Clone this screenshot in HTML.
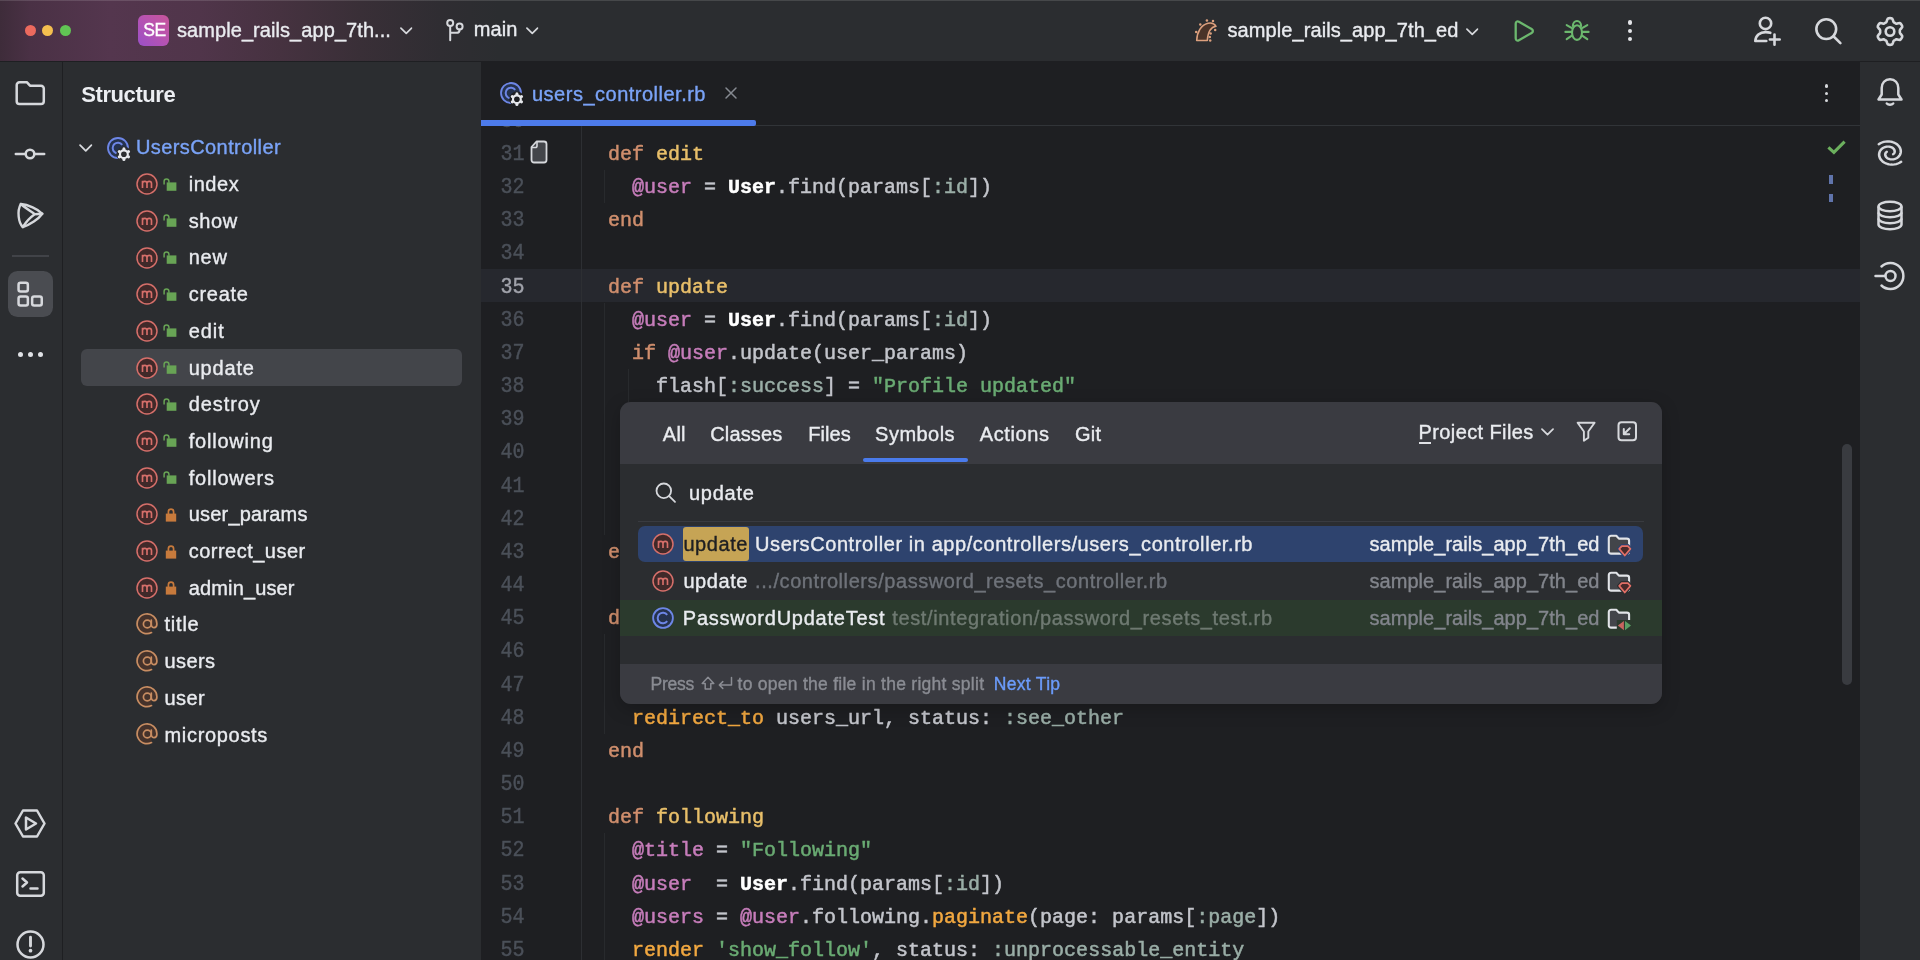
<!DOCTYPE html>
<html>
<head>
<meta charset="utf-8">
<title>RubyMine</title>
<style>
*{box-sizing:border-box;margin:0;padding:0}
html,body{width:1920px;height:960px;overflow:hidden;background:#1e1f22}
body{font-family:"Liberation Sans",sans-serif;color:#dfe1e5;position:relative;font-size:20px}
.abs{position:absolute}
svg{display:block;overflow:visible}
.t{position:absolute;white-space:pre;-webkit-text-stroke:.38px currentColor}
#titlebar{left:0;top:0;width:1920px;height:62px;background:linear-gradient(90deg,#3e2c3a 0px,#4a3145 30px,#54364e 110px,#50354a 200px,#463240 280px,#392f37 360px,#2f2d32 440px,#2b2d30 500px,#2b2d30 100%);border-bottom:1px solid #1e1f22;box-shadow:inset 0 1px 0 rgba(255,255,255,.13)}
.tl{width:11px;height:11px;border-radius:50%;top:25px}
#lstrip{left:0;top:62px;width:62.5px;height:898px;background:#2b2d30;border-right:1px solid #1e1f22}
#rstrip{left:1859px;top:62px;width:61px;height:898px;background:#2b2d30;border-left:1px solid #1e1f22}
#struct{left:62.5px;top:62px;width:419px;height:898px;background:#2b2d30;border-right:1px solid #1e1f22}
#editor{left:481px;top:62px;width:1378px;height:898px;background:#1e1f22}
.ln{transform:scaleY(1.1);transform-origin:50% 66%;-webkit-text-stroke:.4px currentColor;position:absolute;left:0;width:43.5px;text-align:right;font-family:"Liberation Mono",monospace;font-size:20px;color:#4b5059;height:33px;line-height:33px}
.cl{-webkit-text-stroke:.5px currentColor;position:absolute;left:103px;font-family:"Liberation Mono",monospace;font-size:20px;color:#c3c5cb;height:33px;line-height:33px;white-space:pre}
.k{color:#cf8e6d}.f{color:#e8bf6a}.iv{color:#c77dbb}.c{color:#fff;font-weight:bold}.sy{color:#9aaea7}.s{color:#6aab73}.o{color:#f2a840}
#popup{left:620px;top:402px;width:1041.8px;height:301.7px;background:#2b2d30;border-radius:11px;overflow:hidden;box-shadow:0 5px 18px rgba(0,0,0,.22)}
#layer,#titlebar,#popup{will-change:transform}
</style>
</head>

<body>

<svg width="0" height="0" style="position:absolute">
<defs>
<symbol id="i-m" viewBox="0 0 22 22"><circle cx="11" cy="11" r="10" fill="#402929" stroke="#d66f6a" stroke-width="1.5"/><path d="M6.5 15V7.8M6.5 10.5c.1-2.8 4.4-3 4.5 0V15M11 10.5c.1-2.8 4.4-3 4.5 0V15" stroke="#d66f6a" stroke-width="1.65" fill="none"/></symbol>
<symbol id="i-c" viewBox="0 0 22 22"><circle cx="11" cy="11" r="9.9" fill="#25324d" stroke="#6d86e6" stroke-width="1.8"/><path d="M15.2 7.8a5.3 5.3 0 1 0 0 6.4" stroke="#6d86e6" stroke-width="2" fill="none"/></symbol>
<symbol id="i-at" viewBox="0 0 22 22"><path d="M15.5 19.6A9.9 9.9 0 1 1 20.9 11c0 5-5.6 4.4-5.6 .8V7" fill="#45322b" stroke="#c88d62" stroke-width="1.7" stroke-linecap="round"/><circle cx="11.3" cy="11" r="3.9" fill="none" stroke="#c88d62" stroke-width="1.7"/></symbol>
<symbol id="i-lo" viewBox="0 0 14 14"><rect x="3.7" y="4.4" width="9.7" height="8.4" fill="#68a455"/><path d="M1.1 6.4V3.3a2.4 2.4 0 0 1 4.8 0V4.8" stroke="#68a455" stroke-width="1.5" fill="none"/></symbol>
<symbol id="i-lc" viewBox="0 0 14 14"><rect x="1.8" y="5.6" width="10.4" height="8" fill="#c77a3c"/><path d="M4.4 6V3.7a2.6 2.6 0 0 1 5.2 0V6" stroke="#c77a3c" stroke-width="1.7" fill="none"/></symbol>
<symbol id="i-cls" viewBox="0 0 26 26"><circle cx="11" cy="11" r="10" fill="#25324d" stroke="#6d86e6" stroke-width="1.8"/><path d="M15.2 7.8a5.3 5.3 0 1 0 0 6.4" stroke="#6d86e6" stroke-width="2" fill="none"/><g transform="translate(16.9 17.2)"><circle r="7.6" fill="#2b2d30"/><g fill="#e6e8ec"><circle cx="0" cy="-5.3" r="1.55"/><circle cx="4.59" cy="-2.65" r="1.55"/><circle cx="4.59" cy="2.65" r="1.55"/><circle cx="0" cy="5.3" r="1.55"/><circle cx="-4.59" cy="2.65" r="1.55"/><circle cx="-4.59" cy="-2.65" r="1.55"/></g><circle r="3.9" fill="none" stroke="#e6e8ec" stroke-width="2.2"/><circle r="2.2" fill="#2b2d30"/></g></symbol>
<symbol id="i-cls2" viewBox="0 0 26 26"><circle cx="11" cy="11" r="10" fill="#25324d" stroke="#6d86e6" stroke-width="1.8"/><path d="M15.2 7.8a5.3 5.3 0 1 0 0 6.4" stroke="#6d86e6" stroke-width="2" fill="none"/><g transform="translate(16.9 17.2)"><circle r="7.6" fill="#1e1f22"/><g fill="#e6e8ec"><circle cx="0" cy="-5.3" r="1.55"/><circle cx="4.59" cy="-2.65" r="1.55"/><circle cx="4.59" cy="2.65" r="1.55"/><circle cx="0" cy="5.3" r="1.55"/><circle cx="-4.59" cy="2.65" r="1.55"/><circle cx="-4.59" cy="-2.65" r="1.55"/></g><circle r="3.9" fill="none" stroke="#e6e8ec" stroke-width="2.2"/><circle r="2.2" fill="#1e1f22"/></g></symbol>
<symbol id="i-chev" viewBox="0 0 14 9"><path d="M1 1.2l6 6 6-6" fill="none" stroke="#d6d8dc" stroke-width="1.9" stroke-linecap="round" stroke-linejoin="round"/></symbol>
</defs>
</svg>

<div id="titlebar" class="abs">
<div class="abs tl" style="left:25px;background:#ec6a5e"></div>
<div class="abs tl" style="left:42.3px;background:#f4bf4f"></div>
<div class="abs tl" style="left:60px;background:#61c454"></div>
<div class="abs" style="left:138px;top:15px;width:31px;height:31px;border-radius:6px;background:linear-gradient(45deg,#9a50c8 0%,#b853b0 55%,#c8559a 100%)"></div>
<div class="t" style="left:143.2px;top:19.33px;font-size:17.5px;line-height:23px;color:#fff;letter-spacing:-0.38px;">SE</div>
<div class="t" style="left:177px;top:16.77px;font-size:20px;line-height:26px;color:#e9ebef;letter-spacing:0.071px;">sample_rails_app_7th...</div>
<div class="t" style="left:473.7px;top:16.47px;font-size:20px;line-height:26px;color:#e9ebef;letter-spacing:0.11px;">main</div>
<div class="t" style="left:1227.5px;top:17.07px;font-size:20px;line-height:26px;color:#e9ebef;letter-spacing:0.084px;">sample_rails_app_7th_ed</div>
<svg class="abs" style="left:400px;top:26.5px" width="12.5" height="8"><use href="#i-chev"/></svg>
<svg class="abs" style="left:525.5px;top:26.5px" width="12.5" height="8"><use href="#i-chev"/></svg>
<svg class="abs" style="left:1466px;top:27.5px" width="12.5" height="8"><use href="#i-chev"/></svg>
<svg class="abs" style="left:445px;top:19px" width="20" height="22" viewBox="0 0 20 22" ><g fill="none" stroke="#d6d8dc" stroke-width="2" stroke-linecap="round"><circle cx="5.2" cy="4.1" r="3"/><circle cx="14.6" cy="7.4" r="3"/><path d="M5.2 7.2V21.3M14.6 10.5v.4c0 2-1.4 2.9-3.4 2.9H5.3"/></g></svg>
<svg class="abs" style="left:1195px;top:19px" width="23" height="23" viewBox="0 0 23 23" ><path d="M1.7 21.5C2 13 6 6 13 4.3c3.5-.800 6.5.500 8 3-5 .700-8 4.7-8.7 14.2z" fill="#4a3328" stroke="#dca07e" stroke-width="1.6" stroke-linejoin="round"/><g fill="#dca07e"><circle cx="1.2" cy="12.9" r="1.25"/><circle cx="5.3" cy="5.4" r="1.25"/><circle cx="11.9" cy="1.5" r="1.25"/><circle cx="18" cy="1.9" r="1.25"/><circle cx="20.2" cy="11.1" r="1.25"/><circle cx="15.6" cy="14.4" r="1.25"/><circle cx="14.8" cy="18" r="1.25"/><circle cx="15.2" cy="21.5" r="1.25"/></g></svg>
<svg class="abs" style="left:1513px;top:18.7px" width="24" height="24" viewBox="0 0 24 24" ><path d="M2.7 4.7c0-2 1.5-2.9 3.2-1.9l12.7 7.3c1.7 1 1.7 2.8 0 3.8l-12.7 7.3c-1.7 1-3.2.1-3.2-1.9z" fill="none" stroke="#6cb86e" stroke-width="2.3" stroke-linejoin="round"/></svg>
<svg class="abs" style="left:1564px;top:18px" width="26" height="24" viewBox="0 0 26 24" ><g fill="none" stroke="#6cb86e" stroke-width="2.1" stroke-linecap="round"><ellipse cx="13" cy="14.6" rx="5" ry="7.3"/><path d="M8.9 8a4.1 5 0 0 1 8.2 0"/><path d="M2.7 7.1l4.8 2.7M1.4 13.9h5.8M2.7 21.2l4.8-3.3M23.3 7.1l-4.8 2.7M24.6 13.9h-5.8M23.3 21.2l-4.8-3.3"/></g></svg>
<div class="abs" style="left:1627.9px;top:20.2px;width:4.4px;height:4.4px;border-radius:50%;background:#e4e5e9"></div>
<div class="abs" style="left:1627.9px;top:28.5px;width:4.4px;height:4.4px;border-radius:50%;background:#e4e5e9"></div>
<div class="abs" style="left:1627.9px;top:36.699999999999996px;width:4.4px;height:4.4px;border-radius:50%;background:#e4e5e9"></div>
<svg class="abs" style="left:1753px;top:16px" width="30" height="31" viewBox="0 0 30 31" ><g fill="none" stroke="#d6d8dc" stroke-width="2.6" stroke-linecap="round" stroke-linejoin="round"><circle cx="12.5" cy="7.4" r="5.7"/><path d="M17.3 16.8c-1.5-.5-3-.7-4.6-.7-6 0-10.1 3.6-10.4 8.9h11"/><path d="M21.5 18.6v10.2M16.9 23.5h9.8"/></g></svg>
<svg class="abs" style="left:1814px;top:17px" width="29" height="29" viewBox="0 0 29 29" ><g fill="none" stroke="#d6d8dc" stroke-width="2.6" stroke-linecap="round"><circle cx="12.25" cy="12.1" r="9.9"/><path d="M19.4 19.3l7 6.8"/></g></svg>
<svg class="abs" style="left:1875px;top:15.5px" width="30" height="31" viewBox="0 0 30 31" ><g fill="none" stroke="#d6d8dc" stroke-width="2.6" stroke-linejoin="round"><path d="M24.85 15.5 L24.81 16.36 L25.05 17.27 L26.2 18.5 L27.22 19.95 L27.1 21.14 L26.56 22.17 L25.94 23.16 L24.96 23.86 L23.2 23.7 L21.56 23.31 L20.65 23.57 L19.93 24.03 L19.16 24.43 L18.49 25.08 L18 26.7 L17.26 28.3 L16.16 28.8 L15 28.85 L13.84 28.8 L12.74 28.3 L12 26.7 L11.51 25.08 L10.84 24.43 L10.08 24.03 L9.35 23.57 L8.44 23.31 L6.8 23.7 L5.04 23.86 L4.06 23.16 L3.44 22.18 L2.9 21.14 L2.78 19.95 L3.8 18.5 L4.95 17.27 L5.19 16.36 L5.15 15.5 L5.19 14.64 L4.95 13.73 L3.8 12.5 L2.78 11.05 L2.9 9.86 L3.44 8.82 L4.06 7.84 L5.04 7.14 L6.8 7.3 L8.44 7.69 L9.35 7.43 L10.07 6.97 L10.84 6.57 L11.51 5.92 L12 4.3 L12.74 2.7 L13.84 2.2 L15 2.15 L16.16 2.2 L17.26 2.7 L18 4.3 L18.49 5.92 L19.16 6.57 L19.92 6.97 L20.65 7.43 L21.56 7.69 L23.2 7.3 L24.96 7.14 L25.94 7.84 L26.56 8.83 L27.1 9.86 L27.22 11.05 L26.2 12.5 L25.05 13.73 L24.81 14.64Z"/><circle cx="15" cy="15.5" r="4.3"/></g></svg>
</div>
<div id="lstrip" class="abs"></div>
<div id="struct" class="abs"></div>
<div id="editor" class="abs"></div>
<div id="rstrip" class="abs"></div>
<div id="layer" class="abs" style="left:0;top:0;width:1920px;height:960px">
<svg class="abs" style="left:15px;top:80px" width="31" height="26" viewBox="0 0 31 26" ><path d="M4 2.2h7.3l3.2 3.5h11a2.8 2.8 0 0 1 2.8 2.8V21.2a2.8 2.8 0 0 1-2.8 2.8H4a2.8 2.8 0 0 1-2.8-2.8V5a2.8 2.8 0 0 1 2.8-2.8z" fill="none" stroke="#d6d8dc" stroke-width="2.5" stroke-linejoin="round" transform="translate(.5 0)"/></svg>
<svg class="abs" style="left:14px;top:147px" width="32" height="14" viewBox="0 0 32 14" ><g fill="none" stroke="#d6d8dc" stroke-width="2.5" stroke-linecap="round"><circle cx="16" cy="7" r="4.3"/><path d="M1.8 7h9.5M20.7 7h9.5"/></g></svg>
<svg class="abs" style="left:16px;top:201px" width="28" height="28" viewBox="0 0 28 28" ><g fill="none" stroke="#d6d8dc" stroke-width="2.4" stroke-linejoin="round" stroke-linecap="round"><path d="M4.8 3C12 3.6 22 8 26.3 12.7 22.5 18 14 24 6.8 26 2.5 22 .800 10 4.8 3z"/><path d="M4.8 3C9 6.5 15 10.5 18.7 13.2 14 16.5 10 21 6.8 26M18.7 13.2l7.6-.5"/></g></svg>
<div class="abs" style="left:12px;top:255px;width:37px;height:1.5px;background:#414348"></div>
<div class="abs" style="left:7.8px;top:271.2px;width:45.7px;height:46.2px;border-radius:9.5px;background:#4a4c51"></div>
<svg class="abs" style="left:17px;top:280.5px" width="27" height="27" viewBox="0 0 27 27" ><g fill="none" stroke="#d6d8dc" stroke-width="2.5" stroke-linejoin="round"><rect x="1.55" y="1.65" width="9.3" height="8.9" rx="2"/><rect x="1.55" y="15.4" width="9.3" height="9.1" rx="2"/><rect x="15.15" y="15.4" width="9.6" height="9.1" rx="2"/></g></svg>
<div class="abs" style="left:17.5px;top:352.4px;width:5px;height:5px;border-radius:50%;background:#e0e2e6"></div>
<div class="abs" style="left:27.5px;top:352.4px;width:5px;height:5px;border-radius:50%;background:#e0e2e6"></div>
<div class="abs" style="left:37.5px;top:352.4px;width:5px;height:5px;border-radius:50%;background:#e0e2e6"></div>
<svg class="abs" style="left:14px;top:809px" width="32" height="29" viewBox="0 0 32 29" ><g fill="none" stroke="#d6d8dc" stroke-width="2.5" stroke-linejoin="round"><path d="M9 1.5h14l7.5 13-7.5 13H9l-7.5-13z"/><path d="M12 8.5v12l10-6z"/></g></svg>
<svg class="abs" style="left:15.5px;top:871px" width="29" height="26" viewBox="0 0 29 26" ><g fill="none" stroke="#d6d8dc" stroke-width="2.5" stroke-linejoin="round" stroke-linecap="round"><rect x="1.2" y="1.2" width="26.6" height="23.6" rx="3"/><path d="M6.5 7.5l4.5 4-4.5 4M14.5 17.5h7"/></g></svg>
<svg class="abs" style="left:15.5px;top:930px" width="29" height="29" viewBox="0 0 29 29" ><g fill="none" stroke="#d6d8dc" stroke-width="2.5" stroke-linecap="round"><circle cx="14.5" cy="14.5" r="13"/><path d="M14.5 7.3v8.7" stroke-width="2.9"/></g><circle cx="14.5" cy="20.7" r="1.85" fill="#d6d8dc"/></svg>
<div class="t" style="left:81.3px;top:79.57px;font-size:22px;line-height:29px;color:#eceef2;letter-spacing:-0.422px;font-weight:bold;-webkit-text-stroke:0;">Structure</div>
<div class="abs" style="left:81px;top:349px;width:381px;height:37px;border-radius:6px;background:#43454a"></div>
<svg class="abs" style="left:79px;top:144px" width="13.5" height="8.5"><use href="#i-chev"/></svg>
<svg class="abs" style="left:107px;top:136.5px" width="26" height="26"><use href="#i-cls"/></svg>
<div class="t" style="left:136px;top:134.37px;font-size:20px;line-height:26px;color:#7aa3f7;letter-spacing:0.404px;">UsersController</div>
<svg class="abs" style="left:135.7px;top:173.10000000000002px" width="22" height="22"><use href="#i-m"/></svg>
<svg class="abs" style="left:162.6px;top:177.50000000000003px" width="14" height="14"><use href="#i-lo"/></svg>
<div class="t" style="left:188.7px;top:171.07px;font-size:20px;line-height:26px;color:#e9ebef;letter-spacing:0.537px;">index</div>
<svg class="abs" style="left:135.7px;top:209.8px" width="22" height="22"><use href="#i-m"/></svg>
<svg class="abs" style="left:162.6px;top:214.20000000000002px" width="14" height="14"><use href="#i-lo"/></svg>
<div class="t" style="left:188.7px;top:207.77px;font-size:20px;line-height:26px;color:#e9ebef;letter-spacing:0.574px;">show</div>
<svg class="abs" style="left:135.7px;top:246.5px" width="22" height="22"><use href="#i-m"/></svg>
<svg class="abs" style="left:162.6px;top:250.9px" width="14" height="14"><use href="#i-lo"/></svg>
<div class="t" style="left:188.7px;top:244.47px;font-size:20px;line-height:26px;color:#e9ebef;letter-spacing:0.766px;">new</div>
<svg class="abs" style="left:135.7px;top:283.20000000000005px" width="22" height="22"><use href="#i-m"/></svg>
<svg class="abs" style="left:162.6px;top:287.6px" width="14" height="14"><use href="#i-lo"/></svg>
<div class="t" style="left:188.7px;top:281.17px;font-size:20px;line-height:26px;color:#e9ebef;letter-spacing:0.734px;">create</div>
<svg class="abs" style="left:135.7px;top:319.9px" width="22" height="22"><use href="#i-m"/></svg>
<svg class="abs" style="left:162.6px;top:324.29999999999995px" width="14" height="14"><use href="#i-lo"/></svg>
<div class="t" style="left:188.7px;top:317.87px;font-size:20px;line-height:26px;color:#e9ebef;letter-spacing:0.938px;">edit</div>
<svg class="abs" style="left:135.7px;top:356.6px" width="22" height="22"><use href="#i-m"/></svg>
<svg class="abs" style="left:162.6px;top:361px" width="14" height="14"><use href="#i-lo"/></svg>
<div class="t" style="left:188.7px;top:354.57px;font-size:20px;line-height:26px;color:#e9ebef;letter-spacing:0.805px;">update</div>
<svg class="abs" style="left:135.7px;top:393.30000000000007px" width="22" height="22"><use href="#i-m"/></svg>
<svg class="abs" style="left:162.6px;top:397.70000000000005px" width="14" height="14"><use href="#i-lo"/></svg>
<div class="t" style="left:188.7px;top:391.27px;font-size:20px;line-height:26px;color:#e9ebef;letter-spacing:0.915px;">destroy</div>
<svg class="abs" style="left:135.7px;top:430px" width="22" height="22"><use href="#i-m"/></svg>
<svg class="abs" style="left:162.6px;top:434.4px" width="14" height="14"><use href="#i-lo"/></svg>
<div class="t" style="left:188.7px;top:427.97px;font-size:20px;line-height:26px;color:#e9ebef;letter-spacing:0.797px;">following</div>
<svg class="abs" style="left:135.7px;top:466.70000000000005px" width="22" height="22"><use href="#i-m"/></svg>
<svg class="abs" style="left:162.6px;top:471.1px" width="14" height="14"><use href="#i-lo"/></svg>
<div class="t" style="left:188.7px;top:464.67px;font-size:20px;line-height:26px;color:#e9ebef;letter-spacing:0.786px;">followers</div>
<svg class="abs" style="left:135.7px;top:503.4px" width="22" height="22"><use href="#i-m"/></svg>
<svg class="abs" style="left:164.2px;top:507.79999999999995px" width="14" height="14"><use href="#i-lc"/></svg>
<div class="t" style="left:188.7px;top:501.37px;font-size:20px;line-height:26px;color:#e9ebef;letter-spacing:0.207px;">user_params</div>
<svg class="abs" style="left:135.7px;top:540.1px" width="22" height="22"><use href="#i-m"/></svg>
<svg class="abs" style="left:164.2px;top:544.5px" width="14" height="14"><use href="#i-lc"/></svg>
<div class="t" style="left:188.7px;top:538.07px;font-size:20px;line-height:26px;color:#e9ebef;letter-spacing:0.487px;">correct_user</div>
<svg class="abs" style="left:135.7px;top:576.8000000000001px" width="22" height="22"><use href="#i-m"/></svg>
<svg class="abs" style="left:164.2px;top:581.2px" width="14" height="14"><use href="#i-lc"/></svg>
<div class="t" style="left:188.7px;top:574.77px;font-size:20px;line-height:26px;color:#e9ebef;letter-spacing:0.148px;">admin_user</div>
<svg class="abs" style="left:135.7px;top:612.9px" width="22" height="22"><use href="#i-at"/></svg>
<div class="t" style="left:164.5px;top:611.47px;font-size:20px;line-height:26px;color:#e9ebef;letter-spacing:0.775px;">title</div>
<svg class="abs" style="left:135.7px;top:649.6px" width="22" height="22"><use href="#i-at"/></svg>
<div class="t" style="left:164.5px;top:648.17px;font-size:20px;line-height:26px;color:#e9ebef;letter-spacing:0.379px;">users</div>
<svg class="abs" style="left:135.7px;top:686.3px" width="22" height="22"><use href="#i-at"/></svg>
<div class="t" style="left:164.5px;top:684.87px;font-size:20px;line-height:26px;color:#e9ebef;letter-spacing:0.398px;">user</div>
<svg class="abs" style="left:135.7px;top:723px" width="22" height="22"><use href="#i-at"/></svg>
<div class="t" style="left:164.5px;top:721.57px;font-size:20px;line-height:26px;color:#e9ebef;letter-spacing:0.68px;">microposts</div>
<svg class="abs" style="left:500px;top:82px" width="26" height="26"><use href="#i-cls2"/></svg>
<div class="t" style="left:532px;top:80.57px;font-size:20px;line-height:26px;color:#7aa3f7;letter-spacing:0.498px;">users_controller.rb</div>
<svg class="abs" style="left:725px;top:87px" width="12" height="12" viewBox="0 0 12 12" ><path d="M1 1l10 10M11 1L1 11" stroke="#868a91" stroke-width="1.5" stroke-linecap="round"/></svg>
<div class="abs" style="left:481px;top:125px;width:1379px;height:1px;background:#313438"></div>
<div class="abs" style="left:481px;top:119.5px;width:275px;height:6.3px;border-radius:0 2px 2px 0;background:#4d7beb"></div>
<div class="abs" style="left:1825px;top:84.3px;width:3.4px;height:3.4px;border-radius:50%;background:#d6d8dc"></div>
<div class="abs" style="left:1825px;top:91.7px;width:3.4px;height:3.4px;border-radius:50%;background:#d6d8dc"></div>
<div class="abs" style="left:1825px;top:99.1px;width:3.4px;height:3.4px;border-radius:50%;background:#d6d8dc"></div>
<div class="abs" id="code" style="left:481px;top:126px;width:1379px;height:834px;overflow:hidden"><div class="abs" style="left:0;top:143px;width:1379px;height:33px;background:#26282e"></div>
<div class="abs" style="left:100px;top:0;width:1px;height:840px;background:#2d2f33"></div>
<div class="abs" style="left:123px;top:43.9px;width:1px;height:33px;background:#282a2d"></div>
<div class="abs" style="left:123px;top:176.6px;width:1px;height:232px;background:#282a2d"></div>
<div class="abs" style="left:147px;top:242.9px;width:1px;height:66.2px;background:#282a2d"></div>
<div class="abs" style="left:147px;top:342.5px;width:1px;height:33px;background:#282a2d"></div>
<div class="abs" style="left:123px;top:508.3px;width:1px;height:99.3px;background:#282a2d"></div>
<div class="abs" style="left:123px;top:707.3px;width:1px;height:132.5px;background:#282a2d"></div>
<div class="ln" style="top:-21.25px;color:#4b5059">30</div>
<div class="ln" style="top:11.92px;color:#4b5059">31</div>
<div class="cl" style="top:11.92px">  <span class="k">def</span> <span class="f">edit</span></div>
<div class="ln" style="top:45.09px;color:#4b5059">32</div>
<div class="cl" style="top:45.09px">    <span class="iv">@user</span> = <span class="c">User</span>.find(params[<span class="sy">:id</span>])</div>
<div class="ln" style="top:78.26px;color:#4b5059">33</div>
<div class="cl" style="top:78.26px">  <span class="k">end</span></div>
<div class="ln" style="top:111.43px;color:#4b5059">34</div>
<div class="ln" style="top:144.6px;color:#a1a3ab">35</div>
<div class="cl" style="top:144.6px">  <span class="k">def</span> <span class="f">update</span></div>
<div class="ln" style="top:177.77px;color:#4b5059">36</div>
<div class="cl" style="top:177.77px">    <span class="iv">@user</span> = <span class="c">User</span>.find(params[<span class="sy">:id</span>])</div>
<div class="ln" style="top:210.94px;color:#4b5059">37</div>
<div class="cl" style="top:210.94px">    <span class="k">if</span> <span class="iv">@user</span>.update(user_params)</div>
<div class="ln" style="top:244.11px;color:#4b5059">38</div>
<div class="cl" style="top:244.11px">      flash[<span class="sy">:success</span>] = <span class="s">&quot;Profile updated&quot;</span></div>
<div class="ln" style="top:277.28px;color:#4b5059">39</div>
<div class="cl" style="top:277.28px">      <span class="o">redirect_to</span> <span class="iv">@user</span></div>
<div class="ln" style="top:310.45px;color:#4b5059">40</div>
<div class="cl" style="top:310.45px">    <span class="k">else</span></div>
<div class="ln" style="top:343.62px;color:#4b5059">41</div>
<div class="cl" style="top:343.62px">      <span class="o">render</span> <span class="s">&#x27;edit&#x27;</span>, status: <span class="sy">:unprocessable_entity</span></div>
<div class="ln" style="top:376.79px;color:#4b5059">42</div>
<div class="cl" style="top:376.79px">    <span class="k">end</span></div>
<div class="ln" style="top:409.96px;color:#4b5059">43</div>
<div class="cl" style="top:409.96px">  <span class="k">end</span></div>
<div class="ln" style="top:443.13px;color:#4b5059">44</div>
<div class="ln" style="top:476.3px;color:#4b5059">45</div>
<div class="cl" style="top:476.3px">  <span class="k">def</span> <span class="f">destroy</span></div>
<div class="ln" style="top:509.47px;color:#4b5059">46</div>
<div class="cl" style="top:509.47px">    <span class="c">User</span>.find(params[<span class="sy">:id</span>]).destroy</div>
<div class="ln" style="top:542.64px;color:#4b5059">47</div>
<div class="cl" style="top:542.64px">    flash[<span class="sy">:success</span>] = <span class="s">&quot;User deleted&quot;</span></div>
<div class="ln" style="top:575.81px;color:#4b5059">48</div>
<div class="cl" style="top:575.81px">    <span class="o">redirect_to</span> users_url, status: <span class="sy">:see_other</span></div>
<div class="ln" style="top:608.98px;color:#4b5059">49</div>
<div class="cl" style="top:608.98px">  <span class="k">end</span></div>
<div class="ln" style="top:642.15px;color:#4b5059">50</div>
<div class="ln" style="top:675.32px;color:#4b5059">51</div>
<div class="cl" style="top:675.32px">  <span class="k">def</span> <span class="f">following</span></div>
<div class="ln" style="top:708.49px;color:#4b5059">52</div>
<div class="cl" style="top:708.49px">    <span class="iv">@title</span> = <span class="s">&quot;Following&quot;</span></div>
<div class="ln" style="top:741.66px;color:#4b5059">53</div>
<div class="cl" style="top:741.66px">    <span class="iv">@user</span>  = <span class="c">User</span>.find(params[<span class="sy">:id</span>])</div>
<div class="ln" style="top:774.83px;color:#4b5059">54</div>
<div class="cl" style="top:774.83px">    <span class="iv">@users</span> = <span class="iv">@user</span>.following.<span class="o">paginate</span>(page: params[<span class="sy">:page</span>])</div>
<div class="ln" style="top:808px;color:#4b5059">55</div>
<div class="cl" style="top:808px">    <span class="o">render</span> <span class="s">&#x27;show_follow&#x27;</span>, status: <span class="sy">:unprocessable_entity</span></div>
<svg class="abs" style="left:48.5px;top:13.5px" width="18" height="24" viewBox="0 0 18 24" ><path d="M6.5 1.5h7.5a2.5 2.5 0 0 1 2.5 2.5v16a2.5 2.5 0 0 1-2.5 2.5h-10a2.5 2.5 0 0 1-2.5-2.5v-13z" fill="#43454a" stroke="#d6d8dc" stroke-width="1.8" stroke-linejoin="round"/><path d="M7 1.8v4.2a1.5 1.5 0 0 1-1.5 1.5H1.8" fill="none" stroke="#d6d8dc" stroke-width="1.6"/></svg>
<svg class="abs" style="left:1345px;top:13px" width="21" height="17" viewBox="0 0 21 17" ><path d="M2.4 8.3l5.5 5 10.7-10.6" fill="none" stroke="#6cb05e" stroke-width="3.1"/></svg>
<div class="abs" style="left:1348px;top:49px;width:4px;height:9px;background:#6074ab"></div>
<div class="abs" style="left:1348px;top:67.5px;width:4px;height:8.5px;background:#6074ab"></div>
<div class="abs" style="left:1361px;top:318px;width:10px;height:241px;border-radius:5px;background:#393b40"></div></div>
<svg class="abs" style="left:1876px;top:77px" width="28" height="30" viewBox="0 0 28 30" ><g fill="none" stroke="#d6d8dc" stroke-width="2.5" stroke-linejoin="round" stroke-linecap="round"><path d="M14 2.2c-5 0-8.3 3.8-8.3 8.8v6.5l-3.2 5h23l-3.2-5V11c0-5-3.3-8.8-8.3-8.8z"/><path d="M10.8 26.5c1.5 1.6 4.9 1.6 6.4 0"/></g></svg>
<svg class="abs" style="left:1875px;top:138px" width="30" height="30" viewBox="0 0 30 30" ><g fill="none" stroke="#d6d8dc" stroke-width="2.5" stroke-linecap="round" stroke-linejoin="round" transform="translate(14.95 15) scale(1.03 .95)"><path d="M-10.86 -9.31 L-9.35 -10.28 L-7.74 -11.05 L-6.07 -11.63 L-4.35 -12.01 L-2.63 -12.19 L-0.92 -12.17 L0.74 -11.96 L2.33 -11.57 L3.82 -11.02 L5.2 -10.31 L6.45 -9.47 L7.55 -8.51 L8.48 -7.46 L9.25 -6.33 L9.84 -5.14 L10.24 -3.93 L10.47 -2.7 L10.52 -1.48 L10.4 -0.3 L10.12 0.84 L9.7 1.91 L9.13 2.9 L8.45 3.79 L7.66 4.58 L6.79 5.26 L5.86 5.81 L4.88 6.24 L3.87 6.54 L2.86 6.72 L1.86 6.77 L0.89 6.71 L-0.03 6.54 L-0.9 6.27 L-1.69 5.91 L-2.4 5.48 L-3.02 4.98 L-3.53 4.43 L-3.95 3.84 L-4.26 3.24 L-4.47 2.62 L-4.58 2.01 L-4.59 1.41 L-4.51 0.85 L-4.35 0.32 L-4.12 -0.15 L-3.83 -0.57 L-3.49 -0.93 L-3.12 -1.23M10.86 9.31 L9.35 10.28 L7.74 11.05 L6.07 11.63 L4.35 12.01 L2.63 12.19 L0.92 12.17 L-0.74 11.96 L-2.33 11.57 L-3.82 11.02 L-5.2 10.31 L-6.45 9.47 L-7.55 8.51 L-8.48 7.46 L-9.25 6.33 L-9.84 5.14 L-10.24 3.93 L-10.47 2.7 L-10.52 1.48 L-10.4 0.3 L-10.12 -0.84 L-9.7 -1.91 L-9.13 -2.9 L-8.45 -3.79 L-7.66 -4.58 L-6.79 -5.26 L-5.86 -5.81 L-4.88 -6.24 L-3.87 -6.54 L-2.86 -6.72 L-1.86 -6.77 L-0.89 -6.71 L0.03 -6.54 L0.9 -6.27 L1.69 -5.91 L2.4 -5.48 L3.02 -4.98 L3.53 -4.43 L3.95 -3.84 L4.26 -3.24 L4.47 -2.62 L4.58 -2.01 L4.59 -1.41 L4.51 -0.85 L4.35 -0.32 L4.12 0.15 L3.83 0.57 L3.49 0.93 L3.12 1.23"/></g></svg>
<svg class="abs" style="left:1876px;top:200px" width="28" height="31" viewBox="0 0 28 31" ><g fill="none" stroke="#d6d8dc" stroke-width="2.5"><ellipse cx="14" cy="6.5" rx="11.5" ry="4.7"/><path d="M2.5 6.5v18c0 2.6 5.1 4.7 11.5 4.7s11.5-2.1 11.5-4.7v-18"/><path d="M2.5 12.5c0 2.6 5.1 4.7 11.5 4.7s11.5-2.1 11.5-4.7M2.5 18.5c0 2.6 5.1 4.7 11.5 4.7s11.5-2.1 11.5-4.7"/></g></svg>
<svg class="abs" style="left:1874px;top:261px" width="32" height="30" viewBox="0 0 32 30" ><g fill="none" stroke="#d6d8dc" stroke-width="2.5" stroke-linecap="round"><path d="M7.5 5.5A13 13 0 1 1 7.5 24.5"/><circle cx="16.5" cy="15" r="5"/><path d="M1.5 15H11"/></g></svg>
</div>
<div id="popup" class="abs">
<div class="abs" style="left:0px;top:0px;width:1042px;height:62.3px;background:#3a3b41"></div>
<div class="abs" style="left:0px;top:261.7px;width:1042px;height:41px;background:#3a3b41"></div>
<div class="t" style="left:42.8px;top:19.27px;font-size:20px;line-height:26px;color:#e9ebef;letter-spacing:0.255px;">All</div>
<div class="t" style="left:90.2px;top:19.27px;font-size:20px;line-height:26px;color:#e9ebef;letter-spacing:0.166px;">Classes</div>
<div class="t" style="left:188.2px;top:19.27px;font-size:20px;line-height:26px;color:#e9ebef;letter-spacing:0.053px;">Files</div>
<div class="t" style="left:255.1px;top:19.27px;font-size:20px;line-height:26px;color:#e9ebef;letter-spacing:0.471px;">Symbols</div>
<div class="t" style="left:359.7px;top:19.27px;font-size:20px;line-height:26px;color:#e9ebef;letter-spacing:0.629px;">Actions</div>
<div class="t" style="left:455px;top:19.27px;font-size:20px;line-height:26px;color:#e9ebef;letter-spacing:0.312px;">Git</div>
<div class="abs" style="left:243px;top:55.6px;width:105px;height:4.8px;background:#4a7bec;border-radius:2.4px"></div>
<div class="t" style="left:798.6px;top:16.77px;font-size:20px;line-height:26px;color:#e9ebef;letter-spacing:0.382px;">Project Files</div>
<div class="abs" style="left:799px;top:40.3px;width:11.5px;height:1.4px;background:#dfe1e5"></div>
<svg class="abs" style="left:920.5px;top:26px" width="13" height="8.3"><use href="#i-chev"/></svg>
<svg class="abs" style="left:955.5px;top:18.80000000000001px" width="20" height="21" viewBox="0 0 20 21" ><path d="M1.6 1.8h17l-6.3 8.7v6.2l-4.4 3v-9.2z" fill="none" stroke="#d6d8dc" stroke-width="1.9" stroke-linejoin="round"/></svg>
<svg class="abs" style="left:996.5px;top:19px" width="21" height="21" viewBox="0 0 21 21" ><g fill="none" stroke="#d6d8dc" stroke-width="2" stroke-linecap="round" stroke-linejoin="round"><rect x="1.5" y="1.2" width="17.5" height="18" rx="3"/><path d="M12.8 7.2l-5.6 5.6M6.8 8v5.2h5.4"/></g></svg>
<svg class="abs" style="left:35px;top:80.39999999999998px" width="22" height="21" viewBox="0 0 22 21" ><g fill="none" stroke="#d6d8dc" stroke-width="1.8" stroke-linecap="round"><circle cx="8.8" cy="8.8" r="7.3"/><path d="M14.2 14.2l5.8 5.6"/></g></svg>
<div class="t" style="left:69px;top:77.77px;font-size:20px;line-height:26px;color:#e9ebef;letter-spacing:0.721px;">update</div>
<div class="abs" style="left:18.4px;top:118.5px;width:1006px;height:1.2px;background:#393b40"></div>
<div class="abs" style="left:18.2px;top:123.8px;width:1004.5px;height:36.4px;background:#2e436e;border-radius:7px"></div>
<div class="abs" style="left:0px;top:197.8px;width:1042px;height:36px;background:#2b3a2d"></div>
<div class="abs" style="left:62.8px;top:125.2px;width:65.8px;height:33.4px;background:#c6a455;border-radius:3px"></div>
<svg class="abs" style="left:32px;top:130.79999999999995px" width="22" height="22"><use href="#i-m"/></svg>
<svg class="abs" style="left:32px;top:167.79999999999995px" width="22" height="22"><use href="#i-m"/></svg>
<svg class="abs" style="left:32px;top:204.60000000000002px" width="22" height="22"><use href="#i-c"/></svg>
<div class="t" style="left:63.4px;top:128.77px;font-size:20px;line-height:26px;color:#1e1f22;letter-spacing:0.571px;">update</div>
<div class="t" style="left:135.1px;top:128.77px;font-size:20px;line-height:26px;color:#e9ebef;letter-spacing:0.576px;">UsersController in app/controllers/users_controller.rb</div>
<div class="t" style="left:63.4px;top:165.77px;font-size:20px;line-height:26px;color:#e9ebef;letter-spacing:0.571px;">update</div>
<div class="t" style="left:135.1px;top:165.77px;font-size:20px;line-height:26px;color:#6f737a;letter-spacing:0.57px;">.../controllers/password_resets_controller.rb</div>
<div class="t" style="left:62.8px;top:202.57px;font-size:20px;line-height:26px;color:#e9ebef;letter-spacing:0.756px;">PasswordUpdateTest</div>
<div class="t" style="left:272.2px;top:202.57px;font-size:20px;line-height:26px;color:#6f7a72;letter-spacing:0.646px;">test/integration/password_resets_test.rb</div>
<div class="t" style="left:749.5px;top:128.77px;font-size:20px;line-height:26px;color:#e9ebef;letter-spacing:0.041px;">sample_rails_app_7th_ed</div>
<div class="t" style="left:749.5px;top:165.77px;font-size:20px;line-height:26px;color:#82858c;letter-spacing:0.041px;">sample_rails_app_7th_ed</div>
<div class="t" style="left:749.5px;top:202.57px;font-size:20px;line-height:26px;color:#82858c;letter-spacing:0.041px;">sample_rails_app_7th_ed</div>
<div class="t" style="left:30.6px;top:271.13px;font-size:17.5px;line-height:23px;color:#8a8c93;letter-spacing:-0.247px;">Press</div>
<div class="t" style="left:117.5px;top:271.13px;font-size:17.5px;line-height:23px;color:#8a8c93;letter-spacing:0.269px;">to open the file in the right split</div>
<div class="t" style="left:373.7px;top:271.13px;font-size:17.5px;line-height:23px;color:#6b9bfa;letter-spacing:0.312px;">Next Tip</div>
<svg class="abs" style="left:987px;top:131.69999999999993px" width="26" height="23" viewBox="0 0 26 23" ><path d="M4 1.8h5.3l2.6 2.8h8a2.2 2.2 0 0 1 2.2 2.2V17.4a2.2 2.2 0 0 1-2.2 2.2H4a2.2 2.2 0 0 1-2.2-2.2V4a2.2 2.2 0 0 1 2.2-2.2z" fill="#43454a" stroke="#e2e4e8" stroke-width="2.1" stroke-linejoin="round"/><path transform="translate(0 1.7)" d="M11.3 13.2l3.2-3.6h6.6l3.2 3.6-6.5 7.8z" fill="#2e436e" stroke="#2e436e" stroke-width="2.6" stroke-linejoin="round"/><path transform="translate(0 1.7)" d="M12.2 13.2l2.6-2.8h6l2.6 2.8-5.6 6.6z" fill="#4a2a2a" stroke="#e36f66" stroke-width="1.7" stroke-linejoin="round"/></svg>
<svg class="abs" style="left:987px;top:168.69999999999993px" width="26" height="23" viewBox="0 0 26 23" ><path d="M4 1.8h5.3l2.6 2.8h8a2.2 2.2 0 0 1 2.2 2.2V17.4a2.2 2.2 0 0 1-2.2 2.2H4a2.2 2.2 0 0 1-2.2-2.2V4a2.2 2.2 0 0 1 2.2-2.2z" fill="#43454a" stroke="#e2e4e8" stroke-width="2.1" stroke-linejoin="round"/><path transform="translate(0 1.7)" d="M11.3 13.2l3.2-3.6h6.6l3.2 3.6-6.5 7.8z" fill="#2b2d30" stroke="#2b2d30" stroke-width="2.6" stroke-linejoin="round"/><path transform="translate(0 1.7)" d="M12.2 13.2l2.6-2.8h6l2.6 2.8-5.6 6.6z" fill="#4a2a2a" stroke="#e36f66" stroke-width="1.7" stroke-linejoin="round"/></svg>
<svg class="abs" style="left:987px;top:205.5px" width="26" height="23" viewBox="0 0 26 23" ><path d="M4 1.8h5.3l2.6 2.8h8a2.2 2.2 0 0 1 2.2 2.2V17.4a2.2 2.2 0 0 1-2.2 2.2H4a2.2 2.2 0 0 1-2.2-2.2V4a2.2 2.2 0 0 1 2.2-2.2z" fill="#43454a" stroke="#e2e4e8" stroke-width="2.1" stroke-linejoin="round"/><rect x="9.8" y="12" width="15.5" height="11" fill="#2b3a2d"/><path d="M16.9 12.9v9.4l-6-4.7z" fill="#c8645f"/><path d="M18 12.9v9.4l6-4.7z" fill="#5a9e64"/></svg>
<svg class="abs" style="left:80.70000000000005px;top:274.29999999999995px" width="34" height="15" viewBox="0 0 34 15" ><g fill="none" stroke="#8a8c93" stroke-width="1.5" stroke-linejoin="round" stroke-linecap="round"><path d="M7 1.3l5.8 6.2h-3v5.5h-5.6V7.5h-3z"/><path d="M30.5 1.5v7.5H18.5M21.8 5.6L18.3 9l3.5 3.4"/></g></svg>
</div>
</body>
</html>
